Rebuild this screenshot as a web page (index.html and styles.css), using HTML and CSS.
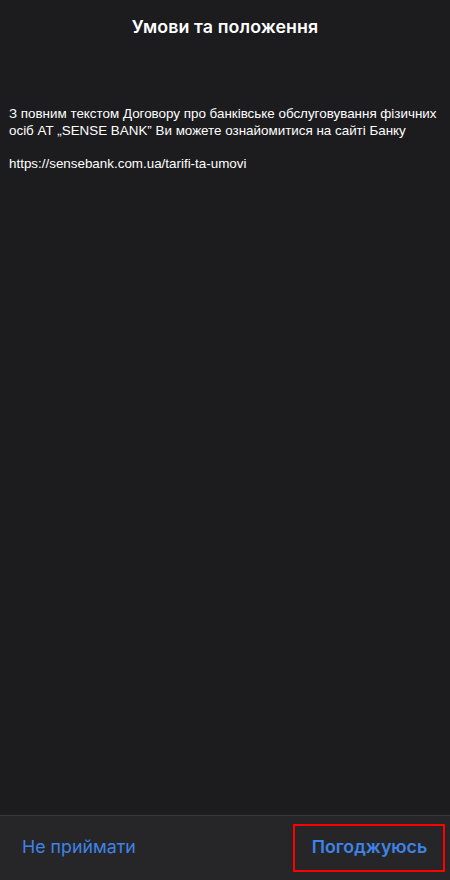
FILE: index.html
```html
<!DOCTYPE html>
<html lang="uk">
<head>
<meta charset="utf-8">
<link rel="stylesheet" href="styles.css">
</head>
<body>
<div class="screen">
  <header class="header">
    <h1 class="title">Умови та положення</h1>
  </header>
  <main class="content">
    <p class="para">З повним текстом Договору про банківське обслуговування фізичних осіб АТ „SENSE BANK” Ви можете ознайомитися на сайті Банку</p>
    <p class="para">https://sensebank.com.ua/tarifi-ta-umovi</p>
  </main>
  <footer class="footer">
    <button class="btn btn-decline">Не приймати</button>
    <button class="btn btn-accept">Погоджуюсь</button>
  </footer>
</div>
</body>
</html>
```

FILE: styles.css
```css
* { box-sizing: border-box; }
html, body {
  margin: 0;
  padding: 0;
  background: #1c1c1e;
}
body {
  font-family: "Inter", "Liberation Sans", Arial, sans-serif;
  color: #ffffff;
}
.screen {
  width: 450px;
  height: 880px;
  display: flex;
  flex-direction: column;
  background: #1c1c1e;
}
.header {
  height: 52px;
  display: flex;
  align-items: center;
  justify-content: center;
}
.title {
  margin: 0;
  font-size: 17.8px;
  font-weight: 600;
  color: #ffffff;
  letter-spacing: 0.1px;
}
.content {
  flex: 1;
  padding: 53px 9px 0 9px;
}
.para {
  margin: 0 0 16px 0;
  font-family: "Liberation Sans", Arial, sans-serif;
  font-size: 13.4px;
  line-height: 17px;
  color: #ffffff;
}
.footer {
  height: 65px;
  background: #262628;
  border-top: 1px solid #38383a;
  display: flex;
  align-items: center;
  justify-content: space-between;
  padding: 0 5px 0 0;
}
.btn {
  background: none;
  border: none;
  font-family: "Inter", "Liberation Sans", Arial, sans-serif;
  font-size: 17.8px;
  color: #3f83e6;
  cursor: pointer;
}
.btn-decline {
  padding: 0 0 3px 22px;
  font-weight: 400;
}
.btn-accept {
  width: 152px;
  height: 48px;
  border: 2px solid #ff0000;
  font-weight: 600;
  padding: 0 0 4px 1px;
}
```
